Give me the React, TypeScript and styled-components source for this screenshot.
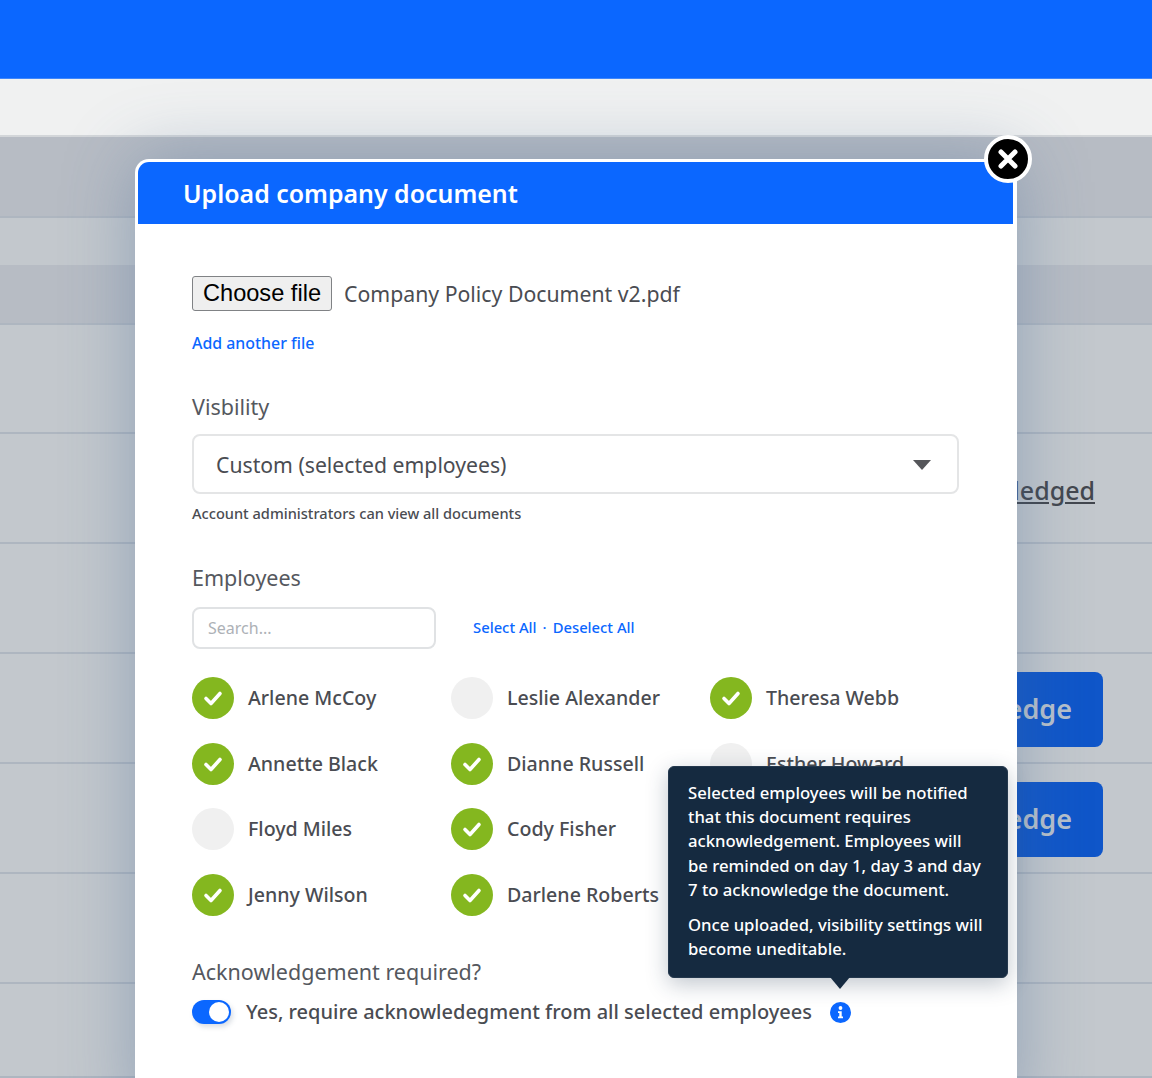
import React from 'react'
import styled, { createGlobalStyle } from 'styled-components'

const GlobalStyle = createGlobalStyle`
  html, body { margin: 0; padding: 0; background: #fff; }
  * { box-sizing: border-box; }
  body { font-family: "Noto Sans", "Open Sans", sans-serif; color: #4a4c52; }
`

const Page = styled.div`
  position: relative;
  width: 1152px;
  height: 1078px;
  overflow: hidden;
  background: #c3c8cd;
`
const TopBar = styled.div`
  height: 79px;
  background: #0b67ff;
  border-bottom: 1px solid #3f86fb;
`
const SubBar = styled.div`
  height: 58px;
  background: #f0f1f1;
  border-bottom: 2px solid #d3d6d9;
`
const Row = styled.div<{ $h: number; $shade?: boolean; $flat?: boolean }>`
  height: ${p => p.$h}px;
  display: flex;
  align-items: center;
  justify-content: flex-end;
  background: ${p => (p.$shade ? '#b7bcc4' : '#c3c8cd')};
  border-bottom: ${p => (p.$flat ? '0' : '2px solid #aeb6c0')};
`
const StatusLink = styled.span`
  margin-right: 57px;
  margin-top: 4px;
  font-size: 25px;
  font-weight: 500;
  color: #43474e;
  text-decoration: underline;
`
const AckButton = styled.div`
  width: 260px;
  height: 75px;
  margin-top: 3px;
  margin-right: 49px;
  padding: 0 31px 3px 0;
  display: flex;
  align-items: center;
  justify-content: flex-end;
  border-radius: 8px;
  background: #0f56c9;
  color: #b8c1cc;
  font-size: 27px;
  font-weight: 600;
`
const Modal = styled.div`
  position: absolute;
  left: 135px;
  top: 159px;
  width: 882px;
  height: 960px;
  background: #fff;
  border-radius: 14px 0 0 0;
  padding: 3px 4px 0 3px;
  box-shadow: 0 0 70px rgba(70, 105, 150, 0.4);
`
const ModalHeader = styled.div`
  height: 62px;
  padding-left: 45px;
  display: flex;
  align-items: center;
  background: #0b67ff;
  border-radius: 11px 0 0 0;
  color: #fff;
  font-size: 24.9px;
  font-weight: 600;
`
const CloseButton = styled.div`
  position: absolute;
  right: -15px;
  top: -24px;
  width: 48px;
  height: 48px;
  border-radius: 50%;
  background: #000;
  border: 4px solid #fff;
  display: flex;
  align-items: center;
  justify-content: center;
`
const ModalBody = styled.div`
  padding: 52px 54px 0;
  display: flex;
  flex-direction: column;
  align-items: flex-start;
`
const FileRow = styled.div`
  display: flex;
  align-items: center;
  gap: 12px;
`
const ChooseFile = styled.button`
  width: 140px;
  height: 35px;
  padding: 0;
  border: 1.5px solid #808285;
  border-radius: 3px;
  background: #efefef;
  color: #000;
  font-family: "Liberation Sans", Arial, sans-serif;
  font-size: 23.6px;
`
const FileName = styled.span`
  font-size: 21.25px;
`
const AddLink = styled.a`
  margin-top: 20px;
  color: #0b67ff;
  font-size: 15.9px;
  font-weight: 500;
  line-height: 24px;
`
const FieldLabel = styled.div<{ $top: number }>`
  margin-top: ${p => p.$top}px;
  font-size: 21.5px;
  line-height: 30px;
  color: #55585e;
`
const SelectBox = styled.div`
  margin-top: 12px;
  width: 767px;
  height: 60px;
  padding: 0 26px 0 22px;
  display: flex;
  align-items: center;
  justify-content: space-between;
  border: 2px solid #e4e5e6;
  border-radius: 8px;
  font-size: 21.2px;
`
const Caret = styled.span`
  width: 0;
  height: 0;
  margin-top: 2px;
  border-left: 9px solid transparent;
  border-right: 9px solid transparent;
  border-top: 10px solid #55565a;
`
const Hint = styled.div`
  margin-top: 8px;
  font-size: 14.6px;
  font-weight: 500;
  line-height: 22px;
`
const SearchRow = styled.div`
  margin-top: 14px;
  display: flex;
  align-items: center;
  gap: 37px;
`
const SearchInput = styled.input`
  width: 244px;
  height: 42px;
  padding: 0 14px;
  border: 2px solid #e0e2e4;
  border-radius: 8px;
  outline: none;
  font-family: inherit;
  font-size: 16px;
  &::placeholder { color: #adb1b6; opacity: 1; }
`
const BulkLinks = styled.div`
  display: flex;
  align-items: center;
  gap: 6px;
  margin-top: -2px;
  color: #0b67ff;
  font-size: 14.8px;
  font-weight: 500;
`
const EmployeeGrid = styled.div`
  margin-top: 28px;
  display: grid;
  grid-template-columns: repeat(3, 259px);
  grid-auto-rows: 65.6px;
`
const Employee = styled.div`
  display: flex;
  align-items: flex-start;
  gap: 14px;
  font-size: 19.6px;
  font-weight: 500;
  line-height: 41px;
`
const Tick = styled.span<{ $on: boolean }>`
  width: 42px;
  height: 42px;
  flex: none;
  border-radius: 50%;
  display: flex;
  align-items: center;
  justify-content: center;
  background: ${p => (p.$on ? '#84b71f' : '#f0f0f0')};
`
const ToggleRow = styled.div`
  margin-top: 10px;
  display: flex;
  align-items: center;
  font-size: 20px;
  font-weight: 500;
  line-height: 30px;
`
const Toggle = styled.span`
  width: 39px;
  height: 24px;
  margin-right: 15px;
  padding: 2px 2px 2px 17px;
  border-radius: 12px;
  background: #0b67ff;
  box-shadow: 2px 3px 5px rgba(70, 90, 120, 0.2);
`
const Knob = styled.span`
  display: block;
  width: 20px;
  height: 20px;
  border-radius: 50%;
  background: #fff;
`
const InfoIcon = styled.svg`
  margin-left: 18px;
  flex: none;
`
const Tooltip = styled.div`
  position: absolute;
  left: 668px;
  top: 766px;
  width: 340px;
  height: 212px;
  padding: 14px 19px;
  background: #152a40;
  border: 1px solid #24384d;
  border-radius: 6px;
  color: #fff;
  font-size: 16.7px;
  font-weight: 500;
  line-height: 24.2px;
  box-shadow: 0 6px 22px rgba(30, 50, 75, 0.28);
  &::after {
    content: '';
    position: absolute;
    left: 161px;
    bottom: -12px;
    width: 0;
    height: 0;
    border-left: 10px solid transparent;
    border-right: 10px solid transparent;
    border-top: 12px solid #152a40;
  }
`
const TipParagraph = styled.p`
  margin: 0 0 11px;
  white-space: nowrap;
`

const employees: [string, boolean][] = [
  ['Arlene McCoy', true],
  ['Leslie Alexander', false],
  ['Theresa Webb', true],
  ['Annette Black', true],
  ['Dianne Russell', true],
  ['Esther Howard', false],
  ['Floyd Miles', false],
  ['Cody Fisher', true],
  ['', false],
  ['Jenny Wilson', true],
  ['Darlene Roberts', true],
]

function App() {
  return (
    <Page>
      <GlobalStyle />
      <TopBar />
      <SubBar />
      <Row $h={81} $shade />
      <Row $h={47} $flat />
      <Row $h={60} $shade />
      <Row $h={109} />
      <Row $h={110}><StatusLink>Acknowledged</StatusLink></Row>
      <Row $h={110} />
      <Row $h={110}><AckButton>Acknowledge</AckButton></Row>
      <Row $h={110}><AckButton>Acknowledge</AckButton></Row>
      <Row $h={110} />
      <Row $h={94} />

      <Modal>
        <CloseButton>
          <svg width="24" height="24" viewBox="0 0 24 24">
            <path d="M5 5l14 14M19 5L5 19" stroke="#fff" strokeWidth="5" strokeLinecap="round" />
          </svg>
        </CloseButton>
        <ModalHeader>Upload company document</ModalHeader>
        <ModalBody>
          <FileRow>
            <ChooseFile>Choose file</ChooseFile>
            <FileName>Company Policy Document v2.pdf</FileName>
          </FileRow>
          <AddLink>Add another file</AddLink>
          <FieldLabel $top={37}>Visbility</FieldLabel>
          <SelectBox>
            Custom (selected employees)
            <Caret />
          </SelectBox>
          <Hint>Account administrators can view all documents</Hint>
          <FieldLabel $top={39}>Employees</FieldLabel>
          <SearchRow>
            <SearchInput placeholder="Search..." />
            <BulkLinks>
              <span>Select All</span>
              <span>·</span>
              <span>Deselect All</span>
            </BulkLinks>
          </SearchRow>
          <EmployeeGrid>
            {employees.map(([name, on], i) => (
              <Employee key={i}>
                {name && (
                  <Tick $on={on}>
                    {on && (
                      <svg width="20" height="20" viewBox="0 0 20 20">
                        <path d="M3 10.5l5 5 9-10" fill="none" stroke="#fff" strokeWidth="3.6" strokeLinecap="round" strokeLinejoin="round" />
                      </svg>
                    )}
                  </Tick>
                )}
                {name}
              </Employee>
            ))}
          </EmployeeGrid>
          <FieldLabel $top={18}>Acknowledgement required?</FieldLabel>
          <ToggleRow>
            <Toggle><Knob /></Toggle>
            Yes, require acknowledegment from all selected employees
            <InfoIcon width="21" height="21" viewBox="0 0 21 21">
              <circle cx="10.5" cy="10.5" r="10.5" fill="#0b67ff" />
              <circle cx="10.5" cy="6" r="1.9" fill="#fff" />
              <path d="M8 9.2h3.7v5.3h1.3v1.8H8v-1.8h1.3v-3.5H8z" fill="#fff" />
            </InfoIcon>
          </ToggleRow>
        </ModalBody>
      </Modal>

      <Tooltip>
        <TipParagraph>
          Selected employees will be notified<br />
          that this document requires<br />
          acknowledgement. Employees will<br />
          be reminded on day 1, day 3 and day<br />
          7 to acknowledge the document.
        </TipParagraph>
        <TipParagraph>
          Once uploaded, visibility settings will<br />
          become uneditable.
        </TipParagraph>
      </Tooltip>
    </Page>
  )
}

export default App
